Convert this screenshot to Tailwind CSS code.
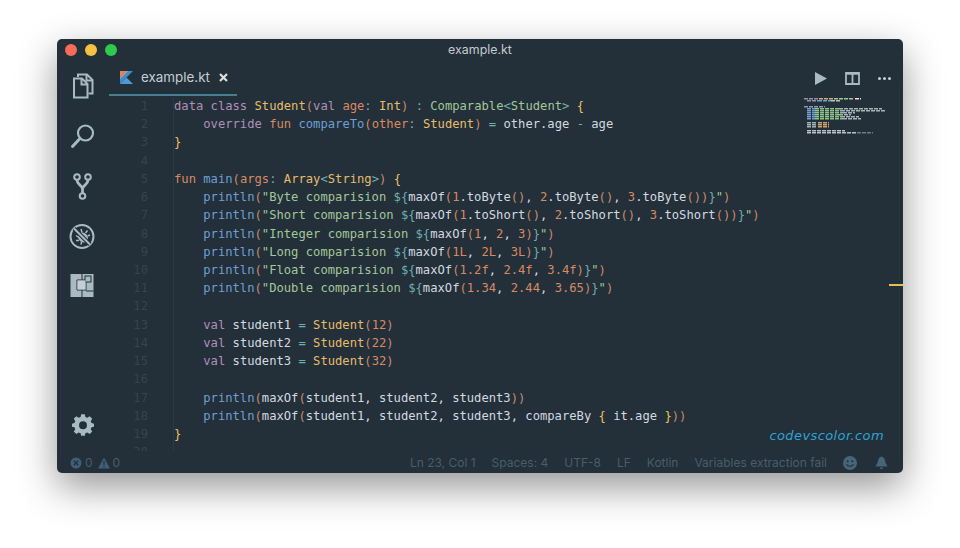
<!DOCTYPE html>
<html lang="en">
<head>
    <meta charset="UTF-8">
    <meta name="viewport" content="width=device-width, initial-scale=1.0">
    <title>example.kt</title>
    <script src="https://cdn.jsdelivr.net/npm/@tailwindcss/browser@4"></script>
</head>
<body class="bg-white w-[960px] h-[548px] overflow-hidden pt-[39px] pl-[57px]">
    <div class="relative flex flex-col w-[846px] h-[434px] rounded-[5px] overflow-hidden bg-[#232f39] shadow-[0_14px_38px_rgba(0,0,0,0.42)] font-['Inter',sans-serif]">

        <!-- title bar -->
        <div class="relative flex items-center justify-center h-[22px] shrink-0">
            <div class="absolute left-[8px] top-[5px] flex gap-[8px]">
                <span class="w-3 h-3 rounded-full bg-[#fc6b58]"></span>
                <span class="w-3 h-3 rounded-full bg-[#f6c043]"></span>
                <span class="w-3 h-3 rounded-full bg-[#2dca4c]"></span>
            </div>
            <span class="text-[12.4px] text-[#c3ccd3]">example.kt</span>
        </div>

        <div class="flex flex-1 min-h-0">
            <!-- activity bar -->
            <div class="flex flex-col items-center w-[52px] shrink-0 pt-[11px] gap-[22px] pb-[15px]">
                <svg class="w-7 h-7" viewBox="0 0 28 28" fill="none" stroke="#a9bac3" stroke-width="2">
                    <path d="M9 5V2.5H18L23.5 8V21.5H19.5"/>
                    <path d="M5 6.5H13L18.5 12V25.5H5Z"/>
                    <path d="M12.5 7V12.5H18"/>
                    <path d="M17.5 3V8.5H23"/>
                </svg>
                <svg class="w-7 h-7" viewBox="0 0 28 28" fill="none" stroke="#a9bac3">
                    <circle cx="16.5" cy="11" r="7.5" stroke-width="2.2"/>
                    <path d="M11 16.5L3.5 24.5" stroke-width="3" stroke-linecap="round"/>
                </svg>
                <svg class="w-7 h-7" viewBox="0 0 28 28" fill="none" stroke="#a9bac3" stroke-width="2">
                    <circle cx="8" cy="5" r="2.8"/>
                    <circle cx="19" cy="5" r="2.8"/>
                    <circle cx="13.5" cy="24" r="2.8"/>
                    <path d="M8 8C8 13 13.5 13 13.5 17V21M19 8C19 13 13.5 13 13.5 17" stroke-width="2.8"/>
                </svg>
                <svg class="w-7 h-7" viewBox="1 -0.5 28 28" fill="none" stroke="#a9bac3" stroke-width="2">
                    <circle cx="14" cy="14" r="11.5"/>
                    <ellipse cx="15" cy="15" rx="4.5" ry="5.5" fill="#a9bac3" stroke="none" transform="rotate(-45 15 15)"/>
                    <path d="M13 6.5L14 10M19.5 8L17.5 10.5M22 12.5L19.5 13.5M8 13L11 15M8 18L11 18M13 22L13.5 19.5" stroke-width="1.5"/>
                    <path d="M6 6L22 22" stroke="#232f39" stroke-width="4"/>
                    <path d="M6 6L22 22"/>
                </svg>
                <svg class="w-7 h-7" viewBox="0 0 28 28">
                    <rect x="1.5" y="2" width="23" height="23" fill="#a9bac3"/>
                    <path d="M13 2V8M8 8H17V18H8ZM13 18V25M17 19H24.5" fill="none" stroke="#232f39" stroke-width="1"/>
                    <rect x="16" y="4" width="6" height="6" fill="#a9bac3" stroke="#232f39" stroke-width="1"/>
                    <rect x="8.5" y="8.5" width="8" height="9" fill="#c2cfd6"/>
                </svg>
                <svg class="w-[22px] h-[22px] mt-auto" viewBox="0 0 24 24" fill="#a9bac3">
                    <path fill-rule="evenodd" d="M10 1.5H14L14.6 4.6L16.7 5.5L19.3 3.7L22.1 6.5L20.4 9.1L21.3 11.2L24 11.8V15.2L21.3 15.8L20.4 17.9L22.1 20.4L19.3 23.2L16.7 21.5L14.6 22.4L14 25H10L9.4 22.4L7.3 21.5L4.7 23.2L1.9 20.4L3.6 17.9L2.7 15.8L0 15.2V11.8L2.7 11.2L3.6 9.1L1.9 6.5L4.7 3.7L7.3 5.5L9.4 4.6ZM12 9.2A4.3 4.3 0 1 0 12 17.8A4.3 4.3 0 1 0 12 9.2Z" transform="translate(0 -1.3)"/>
                </svg>
            </div>

            <!-- editor group -->
            <div class="relative flex flex-col flex-1 min-w-0">
                <div class="flex items-stretch justify-between h-[35px] shrink-0">
                    <div class="flex items-center w-[128px] h-[35px] pl-[11px] gap-[8px] border-b-2 border-[#44808f]">
                        <svg class="w-[13px] h-[13px]" viewBox="0 0 13 13">
                            <path fill="#3e8ccb" d="M6 7L13 0H6.5L0 6.5V13H0Z"/>
                            <path fill="#e9825a" d="M0 0H6.5L0 6.5Z"/>
                            <path fill="#c9a27c" d="M0 6.5L6.5 0H8L0 8Z"/>
                            <path fill="#4f9ad4" d="M0 13L6.5 6.5L13 13Z"/>
                        </svg>
                        <span class="text-[13.4px] text-[#c5ced4]">example.kt</span>
                        <svg class="w-[9px] h-[9px] ml-[1px]" viewBox="0 0 9 9" stroke="#dbe2e6" stroke-width="2.2">
                            <path d="M1 1L8 8M8 1L1 8"/>
                        </svg>
                    </div>
                    <div class="flex items-center gap-[17px] pr-[11px] pb-[1px]">
                        <svg class="w-[15px] h-[15px]" viewBox="0 0 15 15" fill="#a9bac3"><path d="M2 1L14 7.5L2 14Z"/></svg>
                        <svg class="w-[15px] h-[15px]" viewBox="0 0 15 15" fill="none" stroke="#a9bac3" stroke-width="1.8">
                            <path d="M1 2H14V13H1ZM7.5 2V13"/>
                            <path d="M1 2.5H14" stroke-width="2.4"/>
                        </svg>
                        <svg class="w-[15px] h-[15px]" viewBox="0 0 15 15" fill="#c3ced5">
                            <circle cx="2.5" cy="7.5" r="1.5"/><circle cx="7.5" cy="7.5" r="1.5"/><circle cx="12.5" cy="7.5" r="1.5"/>
                        </svg>
                    </div>
                </div>

                <div class="flex flex-1 min-h-0 overflow-hidden pt-[1px] font-['DejaVu_Sans_Mono',monospace] text-[12.16px] leading-[18.22px]">
                    <div class="w-[64px] shrink-0 pr-[25px] text-right text-[#36444f]">
                        <div>1</div><div>2</div><div>3</div><div>4</div><div>5</div><div>6</div><div>7</div><div>8</div><div>9</div><div>10</div><div>11</div><div>12</div><div>13</div><div>14</div><div>15</div><div>16</div><div>17</div><div>18</div><div>19</div><div>20</div>
                    </div>
                    <div class="flex-1 border-l border-[#2b3843] text-[#d3dae0] [&>div]:whitespace-pre">
                        <div><span class="text-[#b18fbb]">data class</span> <span class="text-[#e6bd6b]">Student</span><span class="text-[#c98b6a]">(</span><span class="text-[#b18fbb]">val</span> <span class="text-[#d98a63]">age</span><span class="text-[#6fb0ae]">:</span> <span class="text-[#e6bd6b]">Int</span><span class="text-[#c98b6a]">)</span> <span class="text-[#6fb0ae]">:</span> <span class="text-[#a5c79a]">Comparable</span><span class="text-[#6fb0ae]">&lt;</span><span class="text-[#a5c79a]">Student</span><span class="text-[#6fb0ae]">&gt;</span> <span class="text-[#eec65a]">{</span></div>
                        <div>    <span class="text-[#b18fbb]">override</span> <span class="text-[#d98a63]">fun</span> <span class="text-[#6f9fd3]">compareTo</span><span class="text-[#c98b6a]">(</span><span class="text-[#d98a63]">other</span><span class="text-[#6fb0ae]">:</span> <span class="text-[#e6bd6b]">Student</span><span class="text-[#c98b6a]">)</span> <span class="text-[#6fb0ae]">=</span> other.age <span class="text-[#6fb0ae]">-</span> age</div>
                        <div><span class="text-[#eec65a]">}</span></div>
                        <div> </div>
                        <div><span class="text-[#d98a63]">fun</span> <span class="text-[#6f9fd3]">main</span><span class="text-[#c98b6a]">(</span><span class="text-[#d98a63]">args</span><span class="text-[#6fb0ae]">:</span> <span class="text-[#e6bd6b]">Array</span><span class="text-[#6fb0ae]">&lt;</span><span class="text-[#e6bd6b]">String</span><span class="text-[#6fb0ae]">&gt;</span><span class="text-[#c98b6a]">)</span> <span class="text-[#eec65a]">{</span></div>
                        <div>    <span class="text-[#6f9fd3]">println</span><span class="text-[#c98b6a]">(</span><span class="text-[#a5c79a]">"Byte comparision </span><span class="text-[#6fb0ae]">${</span>maxOf<span class="text-[#c98b6a]">(</span><span class="text-[#d98a63]">1</span>.toByte<span class="text-[#c98b6a]">()</span>, <span class="text-[#d98a63]">2</span>.toByte<span class="text-[#c98b6a]">()</span>, <span class="text-[#d98a63]">3</span>.toByte<span class="text-[#c98b6a]">())</span><span class="text-[#6fb0ae]">}</span><span class="text-[#a5c79a]">"</span><span class="text-[#c98b6a]">)</span></div>
                        <div>    <span class="text-[#6f9fd3]">println</span><span class="text-[#c98b6a]">(</span><span class="text-[#a5c79a]">"Short comparision </span><span class="text-[#6fb0ae]">${</span>maxOf<span class="text-[#c98b6a]">(</span><span class="text-[#d98a63]">1</span>.toShort<span class="text-[#c98b6a]">()</span>, <span class="text-[#d98a63]">2</span>.toShort<span class="text-[#c98b6a]">()</span>, <span class="text-[#d98a63]">3</span>.toShort<span class="text-[#c98b6a]">())</span><span class="text-[#6fb0ae]">}</span><span class="text-[#a5c79a]">"</span><span class="text-[#c98b6a]">)</span></div>
                        <div>    <span class="text-[#6f9fd3]">println</span><span class="text-[#c98b6a]">(</span><span class="text-[#a5c79a]">"Integer comparision </span><span class="text-[#6fb0ae]">${</span>maxOf<span class="text-[#c98b6a]">(</span><span class="text-[#d98a63]">1</span>, <span class="text-[#d98a63]">2</span>, <span class="text-[#d98a63]">3</span><span class="text-[#c98b6a]">)</span><span class="text-[#6fb0ae]">}</span><span class="text-[#a5c79a]">"</span><span class="text-[#c98b6a]">)</span></div>
                        <div>    <span class="text-[#6f9fd3]">println</span><span class="text-[#c98b6a]">(</span><span class="text-[#a5c79a]">"Long comparision </span><span class="text-[#6fb0ae]">${</span>maxOf<span class="text-[#c98b6a]">(</span><span class="text-[#d98a63]">1L</span>, <span class="text-[#d98a63]">2L</span>, <span class="text-[#d98a63]">3L</span><span class="text-[#c98b6a]">)</span><span class="text-[#6fb0ae]">}</span><span class="text-[#a5c79a]">"</span><span class="text-[#c98b6a]">)</span></div>
                        <div>    <span class="text-[#6f9fd3]">println</span><span class="text-[#c98b6a]">(</span><span class="text-[#a5c79a]">"Float comparision </span><span class="text-[#6fb0ae]">${</span>maxOf<span class="text-[#c98b6a]">(</span><span class="text-[#d98a63]">1.2f</span>, <span class="text-[#d98a63]">2.4f</span>, <span class="text-[#d98a63]">3.4f</span><span class="text-[#c98b6a]">)</span><span class="text-[#6fb0ae]">}</span><span class="text-[#a5c79a]">"</span><span class="text-[#c98b6a]">)</span></div>
                        <div>    <span class="text-[#6f9fd3]">println</span><span class="text-[#c98b6a]">(</span><span class="text-[#a5c79a]">"Double comparision </span><span class="text-[#6fb0ae]">${</span>maxOf<span class="text-[#c98b6a]">(</span><span class="text-[#d98a63]">1.34</span>, <span class="text-[#d98a63]">2.44</span>, <span class="text-[#d98a63]">3.65</span><span class="text-[#c98b6a]">)</span><span class="text-[#6fb0ae]">}</span><span class="text-[#a5c79a]">"</span><span class="text-[#c98b6a]">)</span></div>
                        <div> </div>
                        <div>    <span class="text-[#b18fbb]">val</span> student1 <span class="text-[#6fb0ae]">=</span> <span class="text-[#e6bd6b]">Student</span><span class="text-[#c98b6a]">(</span><span class="text-[#d98a63]">12</span><span class="text-[#c98b6a]">)</span></div>
                        <div>    <span class="text-[#b18fbb]">val</span> student2 <span class="text-[#6fb0ae]">=</span> <span class="text-[#e6bd6b]">Student</span><span class="text-[#c98b6a]">(</span><span class="text-[#d98a63]">22</span><span class="text-[#c98b6a]">)</span></div>
                        <div>    <span class="text-[#b18fbb]">val</span> student3 <span class="text-[#6fb0ae]">=</span> <span class="text-[#e6bd6b]">Student</span><span class="text-[#c98b6a]">(</span><span class="text-[#d98a63]">32</span><span class="text-[#c98b6a]">)</span></div>
                        <div> </div>
                        <div>    <span class="text-[#6f9fd3]">println</span><span class="text-[#c98b6a]">(</span>maxOf<span class="text-[#c98b6a]">(</span>student1, student2, student3<span class="text-[#c98b6a]">))</span></div>
                        <div>    <span class="text-[#6f9fd3]">println</span><span class="text-[#c98b6a]">(</span>maxOf<span class="text-[#c98b6a]">(</span>student1, student2, student3, compareBy <span class="text-[#eec65a]">{</span> it.age <span class="text-[#eec65a]">}</span><span class="text-[#c98b6a]">))</span></div>
                        <div><span class="text-[#eec65a]">}</span></div>
                    </div>
                </div>

                <!-- minimap -->
                <svg class="absolute left-[694px] top-[36px] w-[82px] h-[40px] blur-[0.4px]" viewBox="0 0 82 40" fill="none" stroke-width="1.6" stroke-dasharray="4 1">
                    <path stroke="#9a8fae" d="M1 1.8H15"/><path stroke="#c9b27e" d="M16 1.8H30"/><path stroke="#a5c79a" d="M31 1.8H50"/><path stroke="#e6e6e6" d="M52 1.8H58"/>
                    <path stroke="#9a8fae" d="M4 3.8H15"/><path stroke="#6f9fd3" d="M15 3.8H28"/><path stroke="#b9c2c8" d="M28 3.8H38"/>
                    <path stroke="#6f9fd3" d="M4 11.8H12M4 13.8H12M4 15.8H12M4 17.8H12M4 19.8H12M4 21.8H12"/>
                    <path stroke="#8fc28a" d="M12 11.8H36M12 13.8H38M12 15.8H40M12 17.8H36M12 19.8H38M12 21.8H40"/>
                    <path stroke="#a6b4ba" d="M36 11.8H79M38 13.8H82M40 15.8H52M36 17.8H48M38 19.8H56M40 21.8H58"/>
                    <path stroke="#8a9ab0" d="M1 9.8H22"/>
                    <path stroke="#a6b4ba" d="M4 25.8H13M4 27.8H13M4 29.8H13"/>
                    <path stroke="#cfa56a" d="M15 25.8H26M15 27.8H26M15 29.8H26"/>
                    <path stroke="#b9c2c8" d="M4 33.8H42M4 35.8H54"/>
                    <path stroke="#6f7b85" d="M54 35.8H70"/>
                </svg>

                <!-- overview ruler mark -->
                <span class="absolute right-0 top-[223px] w-[14px] h-[2px] bg-[#e0c050]"></span>

                <!-- watermark -->
                <span class="absolute right-[19px] top-[365px] italic text-[13px] tracking-[0.4px] text-[#2ea3d4] font-['DejaVu_Sans',sans-serif]">codevscolor.com</span>
            </div>
        </div>

        <!-- status bar -->
        <div class="flex items-center justify-between h-[22px] shrink-0 pl-[13px] pr-[15px] pt-[1px] text-[12px] text-[#4c5d69]">
            <div class="flex items-center gap-[3px]">
                <svg class="w-[12px] h-[12px]" viewBox="0 0 12 12">
                    <circle cx="6" cy="6" r="5.5" fill="#3f5f76"/>
                    <path d="M3.8 3.8L8.2 8.2M8.2 3.8L3.8 8.2" stroke="#232f39" stroke-width="1.3"/>
                </svg>
                <span>0</span>
                <svg class="w-[12px] h-[12px] ml-[2px]" viewBox="0 0 12 12">
                    <path d="M6 0.5L12 11.5H0Z" fill="#3f5f76"/>
                    <path d="M6 4V8M6 9V10.2" stroke="#232f39" stroke-width="1.2"/>
                </svg>
                <span>0</span>
            </div>
            <div class="flex items-center gap-[16px]">
                <span>Ln 23, Col 1</span>
                <span>Spaces: 4</span>
                <span>UTF-8</span>
                <span>LF</span>
                <span>Kotlin</span>
                <span>Variables extraction fail</span>
                <svg class="w-[14px] h-[14px]" viewBox="0 0 14 14">
                    <circle cx="7" cy="7" r="7" fill="#466579"/>
                    <circle cx="4.7" cy="5.2" r="1" fill="#232f39"/>
                    <circle cx="9.3" cy="5.2" r="1" fill="#232f39"/>
                    <path d="M3.5 8.2C4.5 11 9.5 11 10.5 8.2" fill="none" stroke="#232f39" stroke-width="1.1"/>
                </svg>
                <svg class="w-[13px] h-[14px] ml-[2px]" viewBox="0 0 13 14" fill="#466579">
                    <path d="M6.5 0.5C8.8 1 10 3 10.2 6L12.5 10.5H0.5L2.8 6C3 3 4.2 1 6.5 0.5Z"/>
                    <path d="M4.8 11.5H8.2A1.7 1.7 0 0 1 4.8 11.5Z"/>
                </svg>
            </div>
        </div>
    </div>
</body>
</html>
